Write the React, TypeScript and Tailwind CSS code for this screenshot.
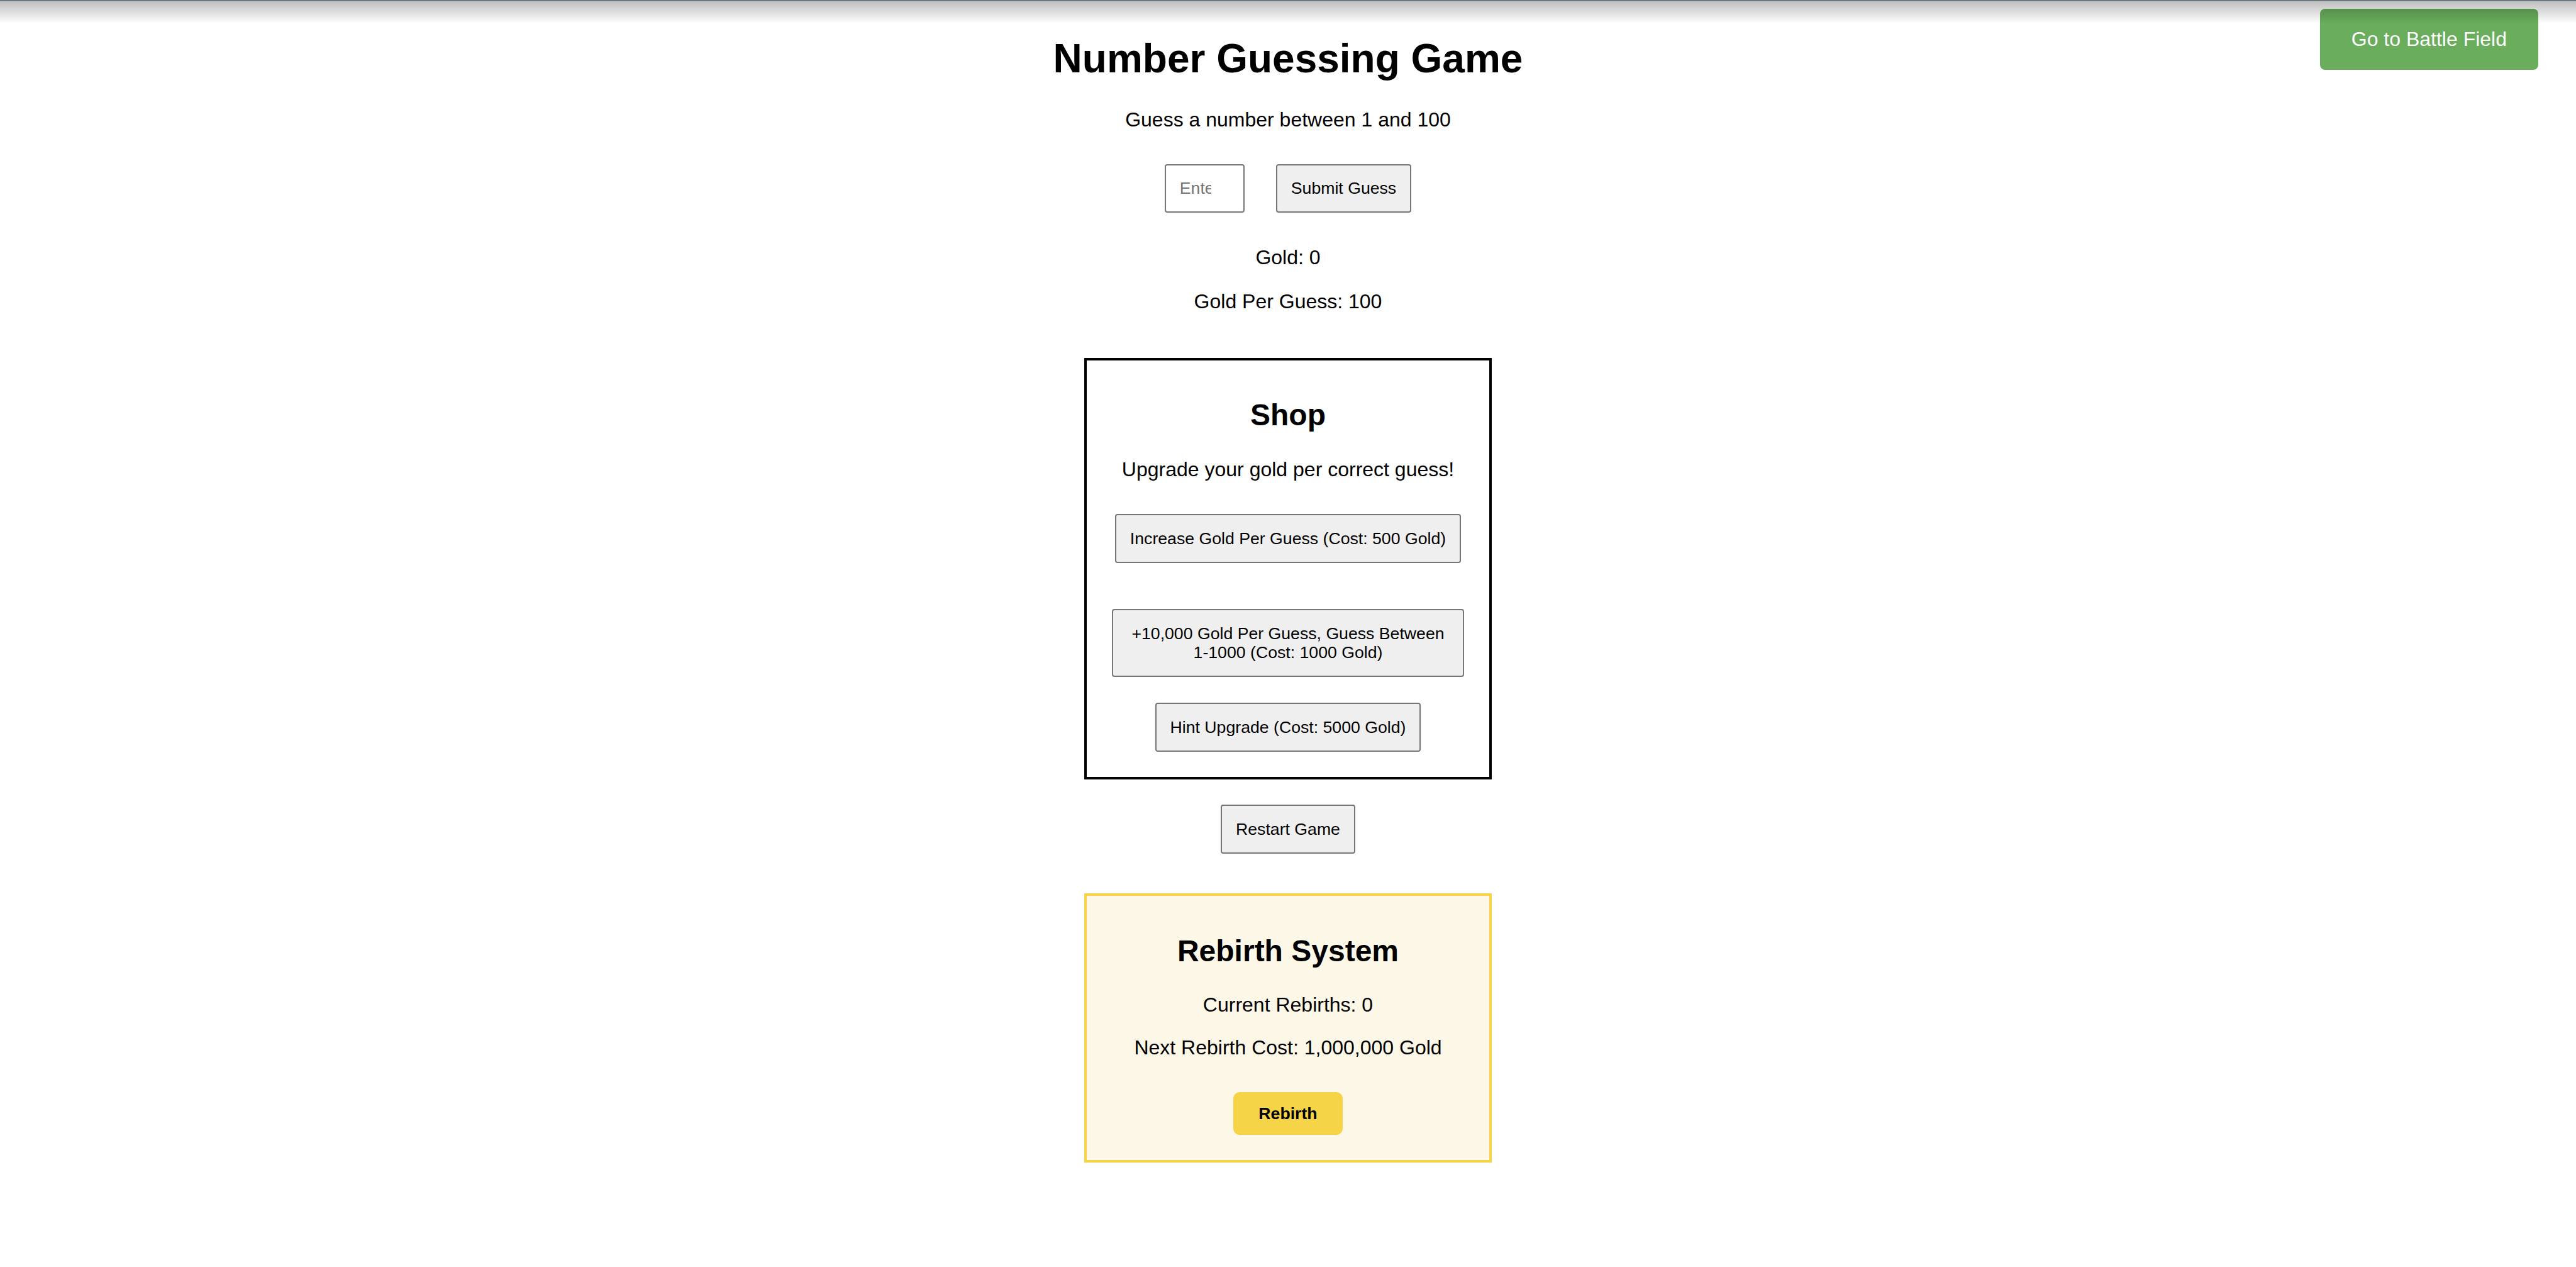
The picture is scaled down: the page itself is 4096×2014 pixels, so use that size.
import React, { useState } from "react";

export default function App() {
  const [gold] = useState(0);
  const [goldPerGuess] = useState(100);
  const [rebirths] = useState(0);
  const [guess, setGuess] = useState("");

  const btn =
    "rounded-[4px] border-2 border-[#767676] bg-[#efefef] px-[22px] py-[22px] text-[26.67px] leading-[30px] text-black";

  return (
    <div className="relative min-h-screen bg-white font-['Liberation_Sans',Arial,sans-serif] text-black">
      {/* top shade */}
      <div className="pointer-events-none absolute inset-x-0 top-0 z-10 h-[38px] border-t-[2px] border-[#6b7681] bg-gradient-to-b from-[rgba(0,0,0,0.25)] to-transparent" />

      <button className="absolute right-[60px] top-[14px] rounded-[8px] bg-[#69ad5d] px-[50px] py-[30px] text-[32px] leading-[37px] text-white">
        Go to Battle Field
      </button>

      <div className="flex flex-col items-center pt-[56px] pb-[120px]">
        <h1 className="text-[64px] font-bold leading-[74px]">Number Guessing Game</h1>
        <p className="mt-[42px] text-[32px] leading-[37px]">Guess a number between 1 and 100</p>

        <div className="mt-[52px] flex items-center gap-[50px]">
          <input
            type="text"
            value={guess}
            onChange={(e) => setGuess(e.target.value)}
            placeholder="Enter your guess"
            className="h-[77px] w-[127px] rounded-[4px] border-2 border-[#767676] bg-white pl-[22px] pr-[51px] text-[26.67px] leading-[30px] text-black outline-none placeholder:text-[#757575]"
          />
          <button className="rounded-[4px] border-2 border-[#767676] bg-[#efefef] px-[22px] py-[21px] text-[26.67px] leading-[31px] text-black">
            Submit Guess
          </button>
        </div>

        <p className="mt-[53px] text-[32px] leading-[37px]">Gold: {gold}</p>
        <p className="mt-[33px] text-[32px] leading-[37px]">Gold Per Guess: {goldPerGuess}</p>

        {/* Shop */}
        <div className="mt-[71px] flex w-[648px] flex-col items-center border-4 border-black px-[40px] pt-[59px] pb-[40px]">
          <h2 className="text-[48px] font-bold leading-[55px]">Shop</h2>
          <p className="mt-[41px] text-[32px] leading-[37px]">Upgrade your gold per correct guess!</p>
          <button className={`mt-[52px] ${btn}`}>Increase Gold Per Guess (Cost: 500 Gold)</button>
          <button className={`mt-[73px] ${btn}`}>
            +10,000 Gold Per Guess, Guess Between 1-1000 (Cost: 1000 Gold)
          </button>
          <button className={`mt-[41px] ${btn}`}>Hint Upgrade (Cost: 5000 Gold)</button>
        </div>

        <button className={`mt-[40px] ${btn}`}>Restart Game</button>

        {/* Rebirth */}
        <div className="mt-[63px] flex w-[648px] flex-col items-center border-4 border-[#f5d547] bg-[#fdf7e7] px-[40px] pt-[60px] pb-[40px]">
          <h2 className="text-[48px] font-bold leading-[55px]">Rebirth System</h2>
          <p className="mt-[40px] text-[32px] leading-[37px]">Current Rebirths: {rebirths}</p>
          <p className="mt-[31px] text-[32px] leading-[37px]">Next Rebirth Cost: 1,000,000 Gold</p>
          <button className="mt-[52px] rounded-[10px] bg-[#f5d547] px-[40px] py-[19px] text-[26.67px] font-bold leading-[30px] text-black">
            Rebirth
          </button>
        </div>
      </div>
    </div>
  );
}
